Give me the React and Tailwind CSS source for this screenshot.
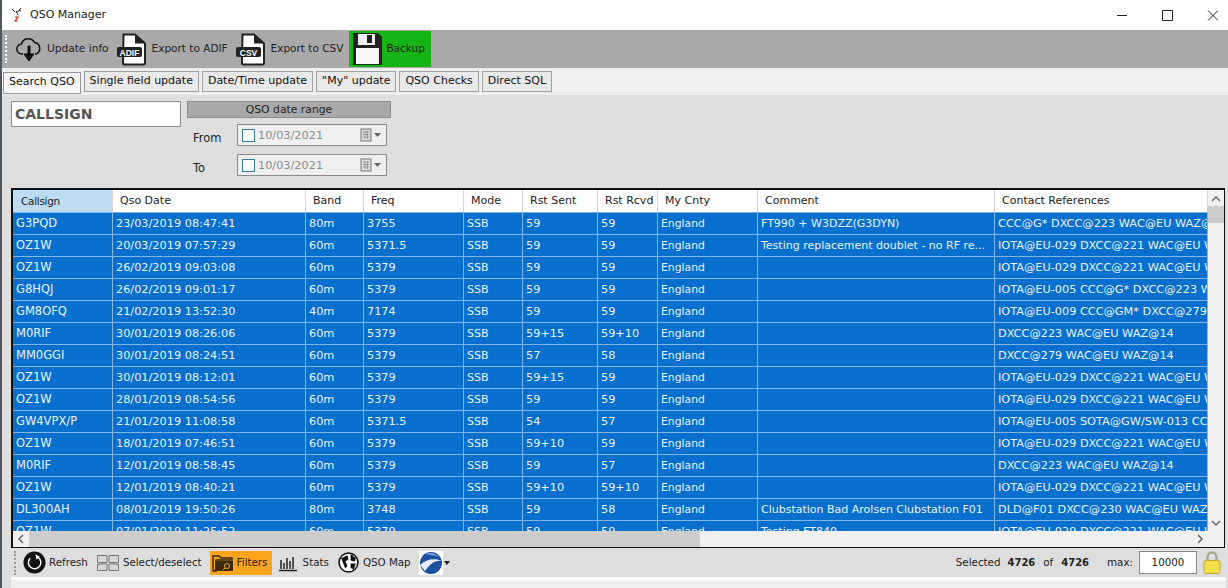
const columns = [
  { label: 'Callsign', width: 'w-[100px]', size: 'text-[11.5px]' },
  { label: 'Qso Date', width: 'w-[193px]', size: 'text-[11.3px]' },
  { label: 'Band', width: 'w-[58px]', size: 'text-[11.3px]' },
  { label: 'Freq', width: 'w-[100px]', size: 'text-[11.3px]' },
  { label: 'Mode', width: 'w-[59px]', size: 'text-[11px]' },
  { label: 'Rst Sent', width: 'w-[75px]', size: 'text-[11.3px]' },
  { label: 'Rst Rcvd', width: 'w-[60px]', size: 'text-[11.3px]' },
  { label: 'My Cnty', width: 'w-[100px]', size: 'text-[10.8px]' },
  { label: 'Comment', width: 'w-[237px]', size: 'text-[11px]' },
  { label: 'Contact References', width: 'w-[213px]', size: 'text-[11.3px]' },
];

const rows = [
  ['G3PQD', '23/03/2019 08:47:41', '80m', '3755', 'SSB', '59', '59', 'England', 'FT990 + W3DZZ(G3DYN)', 'CCC@G* DXCC@223 WAC@EU WAZ@14'],
  ['OZ1W', '20/03/2019 07:57:29', '60m', '5371.5', 'SSB', '59', '59', 'England', 'Testing replacement doublet - no RF re...', 'IOTA@EU-029 DXCC@221 WAC@EU WAZ@14'],
  ['OZ1W', '26/02/2019 09:03:08', '60m', '5379', 'SSB', '59', '59', 'England', '', 'IOTA@EU-029 DXCC@221 WAC@EU WAZ@14'],
  ['G8HQJ', '26/02/2019 09:01:17', '60m', '5379', 'SSB', '59', '59', 'England', '', 'IOTA@EU-005 CCC@G* DXCC@223 WAC@EU'],
  ['GM8OFQ', '21/02/2019 13:52:30', '40m', '7174', 'SSB', '59', '59', 'England', '', 'IOTA@EU-009 CCC@GM* DXCC@279 WAC@EU'],
  ['M0RIF', '30/01/2019 08:26:06', '60m', '5379', 'SSB', '59+15', '59+10', 'England', '', 'DXCC@223 WAC@EU WAZ@14'],
  ['MM0GGI', '30/01/2019 08:24:51', '60m', '5379', 'SSB', '57', '58', 'England', '', 'DXCC@279 WAC@EU WAZ@14'],
  ['OZ1W', '30/01/2019 08:12:01', '60m', '5379', 'SSB', '59+15', '59', 'England', '', 'IOTA@EU-029 DXCC@221 WAC@EU WAZ@14'],
  ['OZ1W', '28/01/2019 08:54:56', '60m', '5379', 'SSB', '59', '59', 'England', '', 'IOTA@EU-029 DXCC@221 WAC@EU WAZ@14'],
  ['GW4VPX/P', '21/01/2019 11:08:58', '60m', '5371.5', 'SSB', '54', '57', 'England', '', 'IOTA@EU-005 SOTA@GW/SW-013 CCC@GW*'],
  ['OZ1W', '18/01/2019 07:46:51', '60m', '5379', 'SSB', '59+10', '59', 'England', '', 'IOTA@EU-029 DXCC@221 WAC@EU WAZ@14'],
  ['M0RIF', '12/01/2019 08:58:45', '60m', '5379', 'SSB', '59', '57', 'England', '', 'DXCC@223 WAC@EU WAZ@14'],
  ['OZ1W', '12/01/2019 08:40:21', '60m', '5379', 'SSB', '59+10', '59+10', 'England', '', 'IOTA@EU-029 DXCC@221 WAC@EU WAZ@14'],
  ['DL300AH', '08/01/2019 19:50:26', '80m', '3748', 'SSB', '59', '58', 'England', 'Clubstation Bad Arolsen Clubstation F01', 'DLD@F01 DXCC@230 WAC@EU WAZ@14'],
  ['OZ1W', '07/01/2019 11:25:52', '60m', '5379', 'SSB', '59', '59', 'England', 'Testing FT840', 'IOTA@EU-029 DXCC@221 WAC@EU WAZ@14'],
];

const tabs = ['Search QSO', 'Single field update', 'Date/Time update', '"My" update', 'QSO Checks', 'Direct SQL'];

const FileIcon = ({ label }) => (
  <svg width="30" height="33" viewBox="0 0 30 33">
    <path d="M6.500 1.500H18l10 9V30a1.500 1.500 0 0 1-1.500 1.500h-19A1.500 1.500 0 0 1 6 30z" fill="#fff" stroke="#222" strokeWidth="2" />
    <path d="M18 1.500v9h10z" fill="#222" />
    <rect x="0" y="14" width="25" height="10" rx="2" fill="#222" />
    <text x="12.500" y="22.500" textAnchor="middle" fontSize="8.500" fontWeight="700" fill="#fff" fontFamily="Liberation Sans, sans-serif">{label}</text>
  </svg>
);

const DateField = ({ label }) => (
  <div className="flex h-[22px]">
    <span className="w-[50px] text-[11.5px] text-[#222] pl-[6px] pt-[6px]">{label}</span>
    <div className="flex items-center w-[150px] h-[22px] bg-[#efefef] border border-[#8a8a8a] pl-[4px]">
      <span className="w-[13px] h-[13px] bg-white border border-[#2f7f9f]" />
      <span className="ml-[3px] pt-[2px] text-[11.3px] text-[#8d8d8d]">10/03/2021</span>
      <svg className="ml-auto mr-[4px]" width="22" height="14" viewBox="0 0 22 14">
        <rect x="1" y="1" width="10" height="12" fill="#ddd" stroke="#777" />
        <path d="M3 4h6M3 6.500h6M3 9h6M5 3v8M7.500 3v8" stroke="#999" strokeWidth="1" />
        <path d="M14 5h7l-3.500 4z" fill="#666" />
      </svg>
    </div>
  </div>
);

export default function App() {
  return (
    <div className='font-["DejaVu_Sans",sans-serif] w-[1228px] h-[588px] overflow-hidden flex flex-col bg-[#dedede] border-l-2 border-[#50565c] text-[11px]'>
      <div className="h-[30px] bg-white flex items-center shrink-0">
        <svg className="ml-[9px]" width="12" height="16" viewBox="0 0 12 16">
          <path d="M1 2l3 3M10 1L7 5 5 4l2 4M8 3l2 1" stroke="#333" strokeWidth="1" fill="none" />
          <path d="M4 10h3l-3 4h3" stroke="#c03020" strokeWidth="1.200" fill="none" />
        </svg>
        <span className="ml-[7px] text-[#222]">QSO Manager</span>
        <svg className="ml-auto" width="101" height="12" viewBox="0 0 101 12">
          <path d="M0 6.500h10M45.500 1.500h10v10h-10zM91 1.500l10 10M101 1.500l-10 10" fill="none" stroke="#222" strokeWidth="1" />
        </svg>
        <div className="w-[10px]" />
      </div>

      <div className="h-[38px] bg-[#a9a9a9] flex items-center pl-[3px] shrink-0">
        <div className="w-[2px] h-[28px] border-l-2 border-dotted border-white" />
        <svg className="ml-[9px]" width="26" height="28" viewBox="0 0 26 28">
          <path d="M7 19H6a5 5 0 0 1-.5-10 7 7 0 0 1 13-1.500A6 6 0 0 1 20 19h-1" fill="none" stroke="#111" strokeWidth="1.500" />
          <path d="M12 11h2v8h4l-5 7-5-7h4z" fill="#111" stroke="#111" strokeWidth="1" />
        </svg>
        <span className="ml-[5px] text-[10.6px] text-[#222]">Update info</span>
        <div className="ml-[8px]"><FileIcon label="ADIF" /></div>
        <span className="ml-[5px] text-[10.5px] text-[#222]">Export to ADIF</span>
        <div className="ml-[8px]"><FileIcon label="CSV" /></div>
        <span className="ml-[5px] text-[10.5px] text-[#222]">Export to CSV</span>
        <div className="flex items-center h-[36px] w-[82px] ml-[6px] bg-[#13b413] pl-[4px]">
          <svg width="29" height="32" viewBox="0 0 29 32">
            <path d="M0 0h25l4 4v28H0z" fill="#222" />
            <rect x="5" y="1" width="17" height="11" fill="#f0f0f0" />
            <rect x="14" y="2" width="5" height="8" fill="#222" />
            <rect x="3" y="15" width="23" height="16" fill="#f7f7f7" />
          </svg>
          <span className="ml-[4px] text-[10.5px] text-[#222]">Backup</span>
        </div>
      </div>

      <div className="h-[27px] bg-[#efefef] flex items-center pl-[1px] gap-[3px] shrink-0">
        {tabs.map((tab, i) => (
          <div
            key={tab}
            className={i === 0
              ? 'h-[22px] mt-[2px] px-[5px] flex items-center bg-[#f7f7f7] border border-[#9a9a9a] text-[#111]'
              : 'h-[21px] px-[5px] flex items-center bg-[#e9e9e9] border border-[#a0a0a0] text-[#111]'}
          >
            {tab}
          </div>
        ))}
      </div>

      <div className="flex-1 min-h-0 flex flex-col pl-[9px] pr-[2px]">
        <div className="h-[93px] flex pt-[6px] shrink-0">
          <div className="w-[170px] h-[26px] bg-white border border-[#8c8c8c] flex items-center pl-[3px] pt-[1px] font-bold text-[14px] text-[#555]">CALLSIGN</div>
          <div className="ml-[6px] w-[204px] flex flex-col">
            <div className="h-[17px] bg-[#a9a9a9] border border-[#8c8c8c] pt-[1px] flex items-center justify-center text-[10.8px] text-[#222]">QSO date range</div>
            <div className="mt-[6px]"><DateField label="From" /></div>
            <div className="mt-[8px]"><DateField label="To" /></div>
          </div>
        </div>

        <div className="relative h-[360px] w-[1214px] bg-[#f0f0f0] border-2 border-[#111] border-r border-b overflow-hidden shrink-0">
          <div className="flex h-[22px] bg-white text-[#222]">
            {columns.map((c, i) => (
              <div
                key={c.label}
                className={i === 0
                  ? `${c.width} shrink-0 pl-[8px] pt-[1px] flex items-center border-r border-[#d5d5d5] bg-[#bcdcf4] text-[10.5px] tracking-[-0.3px]`
                  : `${c.width} shrink-0 pl-[7px] pt-[1px] flex items-center border-r border-[#d5d5d5]`}
              >
                {c.label}
              </div>
            ))}
          </div>
          {rows.map((row, r) => (
            <div key={r} className="flex h-[22px] bg-[#076fce] border-t border-[#82b4e6] text-[#eaf3fb]">
              {row.map((cell, i) => (
                <div key={i} className={`${columns[i].width} ${columns[i].size} shrink-0 pl-[3px] pt-[1px] flex items-center whitespace-nowrap overflow-hidden border-r border-[#82b4e6]`}>
                  {cell}
                </div>
              ))}
            </div>
          ))}

          <div className="absolute right-0 top-0 bottom-0 w-[16px] bg-[#f0f0f0] flex flex-col items-center">
            <svg className="mt-[5px]" width="10" height="8" viewBox="0 0 10 8"><path d="M1 6l4-4 4 4" fill="none" stroke="#666" strokeWidth="1.500" /></svg>
            <div className="mt-[3px] w-[16px] h-[17px] bg-[#cdcdcd]" />
            <svg className="mt-auto mb-[20px]" width="10" height="8" viewBox="0 0 10 8"><path d="M1 2l4 4 4-4" fill="none" stroke="#666" strokeWidth="1.500" /></svg>
          </div>
          <div className="absolute left-0 bottom-0 right-[16px] h-[16px] bg-[#f0f0f0] flex items-center">
            <svg className="ml-[4px]" width="8" height="10" viewBox="0 0 8 10"><path d="M6 1L2 5l4 4" fill="none" stroke="#666" strokeWidth="1.500" /></svg>
            <div className="ml-[4px] w-[671px] h-[16px] bg-[#cdcdcd]" />
            <svg className="ml-auto mr-[4px]" width="8" height="10" viewBox="0 0 8 10"><path d="M2 1l4 4-4 4" fill="none" stroke="#666" strokeWidth="1.500" /></svg>
          </div>
        </div>

        <div className="h-[32px] flex items-center shrink-0 text-[10.3px] text-[#222] border-b-[3px] border-white">
          <div className="ml-[3px] h-[24px] w-[2px] border-l-2 border-dotted border-[#999]" />
          <svg className="ml-[7px]" width="23" height="23" viewBox="0 0 24 24">
            <circle cx="12" cy="12" r="11.500" fill="#111" />
            <path d="M15.500 6.500a6.500 6.500 0 1 1-8 1" fill="none" stroke="#fff" strokeWidth="1.500" />
            <path d="M13 3.500l4.500 2.500-3.500 3z" fill="#fff" />
          </svg>
          <span className="ml-[3px]">Refresh</span>
          <svg className="ml-[9px]" width="22" height="16" viewBox="0 0 22 16">
            <path d="M.5.500h9.500v7H.5zM12 .500h9.500v7H12zM.5 9h9.500v6.500H.5zM12 9h9.500v6.500H12z" fill="#d8d8d8" stroke="#777" />
          </svg>
          <span className="ml-[4px]">Select/deselect</span>
          <div className="ml-[8px] w-[62px] h-[24px] bg-[#fba41c] flex items-center pl-[2px]">
            <svg width="23" height="18" viewBox="0 0 23 18">
              <path d="M1 17V2h6l2 2h11v2H4v11z" fill="none" stroke="#3a2a10" strokeWidth="1.500" />
              <path d="M3 7h18v10H3z" fill="#3a2a10" />
              <circle cx="15" cy="12" r="2.500" fill="none" stroke="#fba41c" />
              <path d="M13 14l-2 2" stroke="#fba41c" />
            </svg>
            <span className="ml-[2px]">Filters</span>
          </div>
          <svg className="ml-[7px]" width="18" height="18" viewBox="0 0 18 18">
            <path d="M2 6v9M5 9v6M8 4v11M11 7v8M14 3v12M0 16.500h18" stroke="#222" strokeWidth="1.500" />
          </svg>
          <span className="ml-[6px]">Stats</span>
          <svg className="ml-[9px]" width="21" height="21" viewBox="0 0 20 20">
            <circle cx="10" cy="10" r="9" fill="#fff" stroke="#111" strokeWidth="1.500" />
            <path d="M3 6l6-3 1 4-3 2 2 4-2 3-2-5zM12 2l5 4-1 3-4-1zM12 11l5 0-2 6-3-2z" fill="#111" />
          </svg>
          <span className="ml-[4px]">QSO Map</span>
          <svg className="ml-[8px]" width="24" height="24" viewBox="0 0 24 24">
            <rect width="24" height="24" fill="#fff" />
            <circle cx="12" cy="12" r="11" fill="#1f4f9f" />
            <path d="M1 14c6-6 15-7 22-4-7-1-12 3-17 10z" fill="#e8eef8" />
            <path d="M6 3c5-2 10-1 14 3-5-2-9-2-14-3z" fill="#7fa4dc" />
          </svg>
          <svg className="ml-[1px]" width="6" height="4" viewBox="0 0 6 4"><path d="M0 0h6L3 4z" fill="#222" /></svg>
          <div className="ml-auto flex items-center">
            <span>Selected</span>
            <span className="ml-[7px] font-bold text-[10px]">4726</span>
            <span className="ml-[8px]">of</span>
            <span className="ml-[8px] font-bold text-[10px]">4726</span>
            <span className="ml-[18px]">max:</span>
            <div className="ml-[6px] w-[58px] h-[23px] bg-white border border-[#8c8c8c] flex items-center justify-center">10000</div>
            <svg className="ml-[6px] mr-[5px]" width="18" height="23" viewBox="0 0 18 23">
              <path d="M4.500 10V6a4.500 4.500 0 0 1 9 0v4" fill="none" stroke="#a8a890" strokeWidth="2.500" />
              <rect x="1" y="9.500" width="16" height="13" rx="2" fill="#f4e04a" stroke="#c4a830" />
            </svg>
          </div>
        </div>
        <div className="flex-1 bg-[#efefef]" />
      </div>
    </div>
  );
}
